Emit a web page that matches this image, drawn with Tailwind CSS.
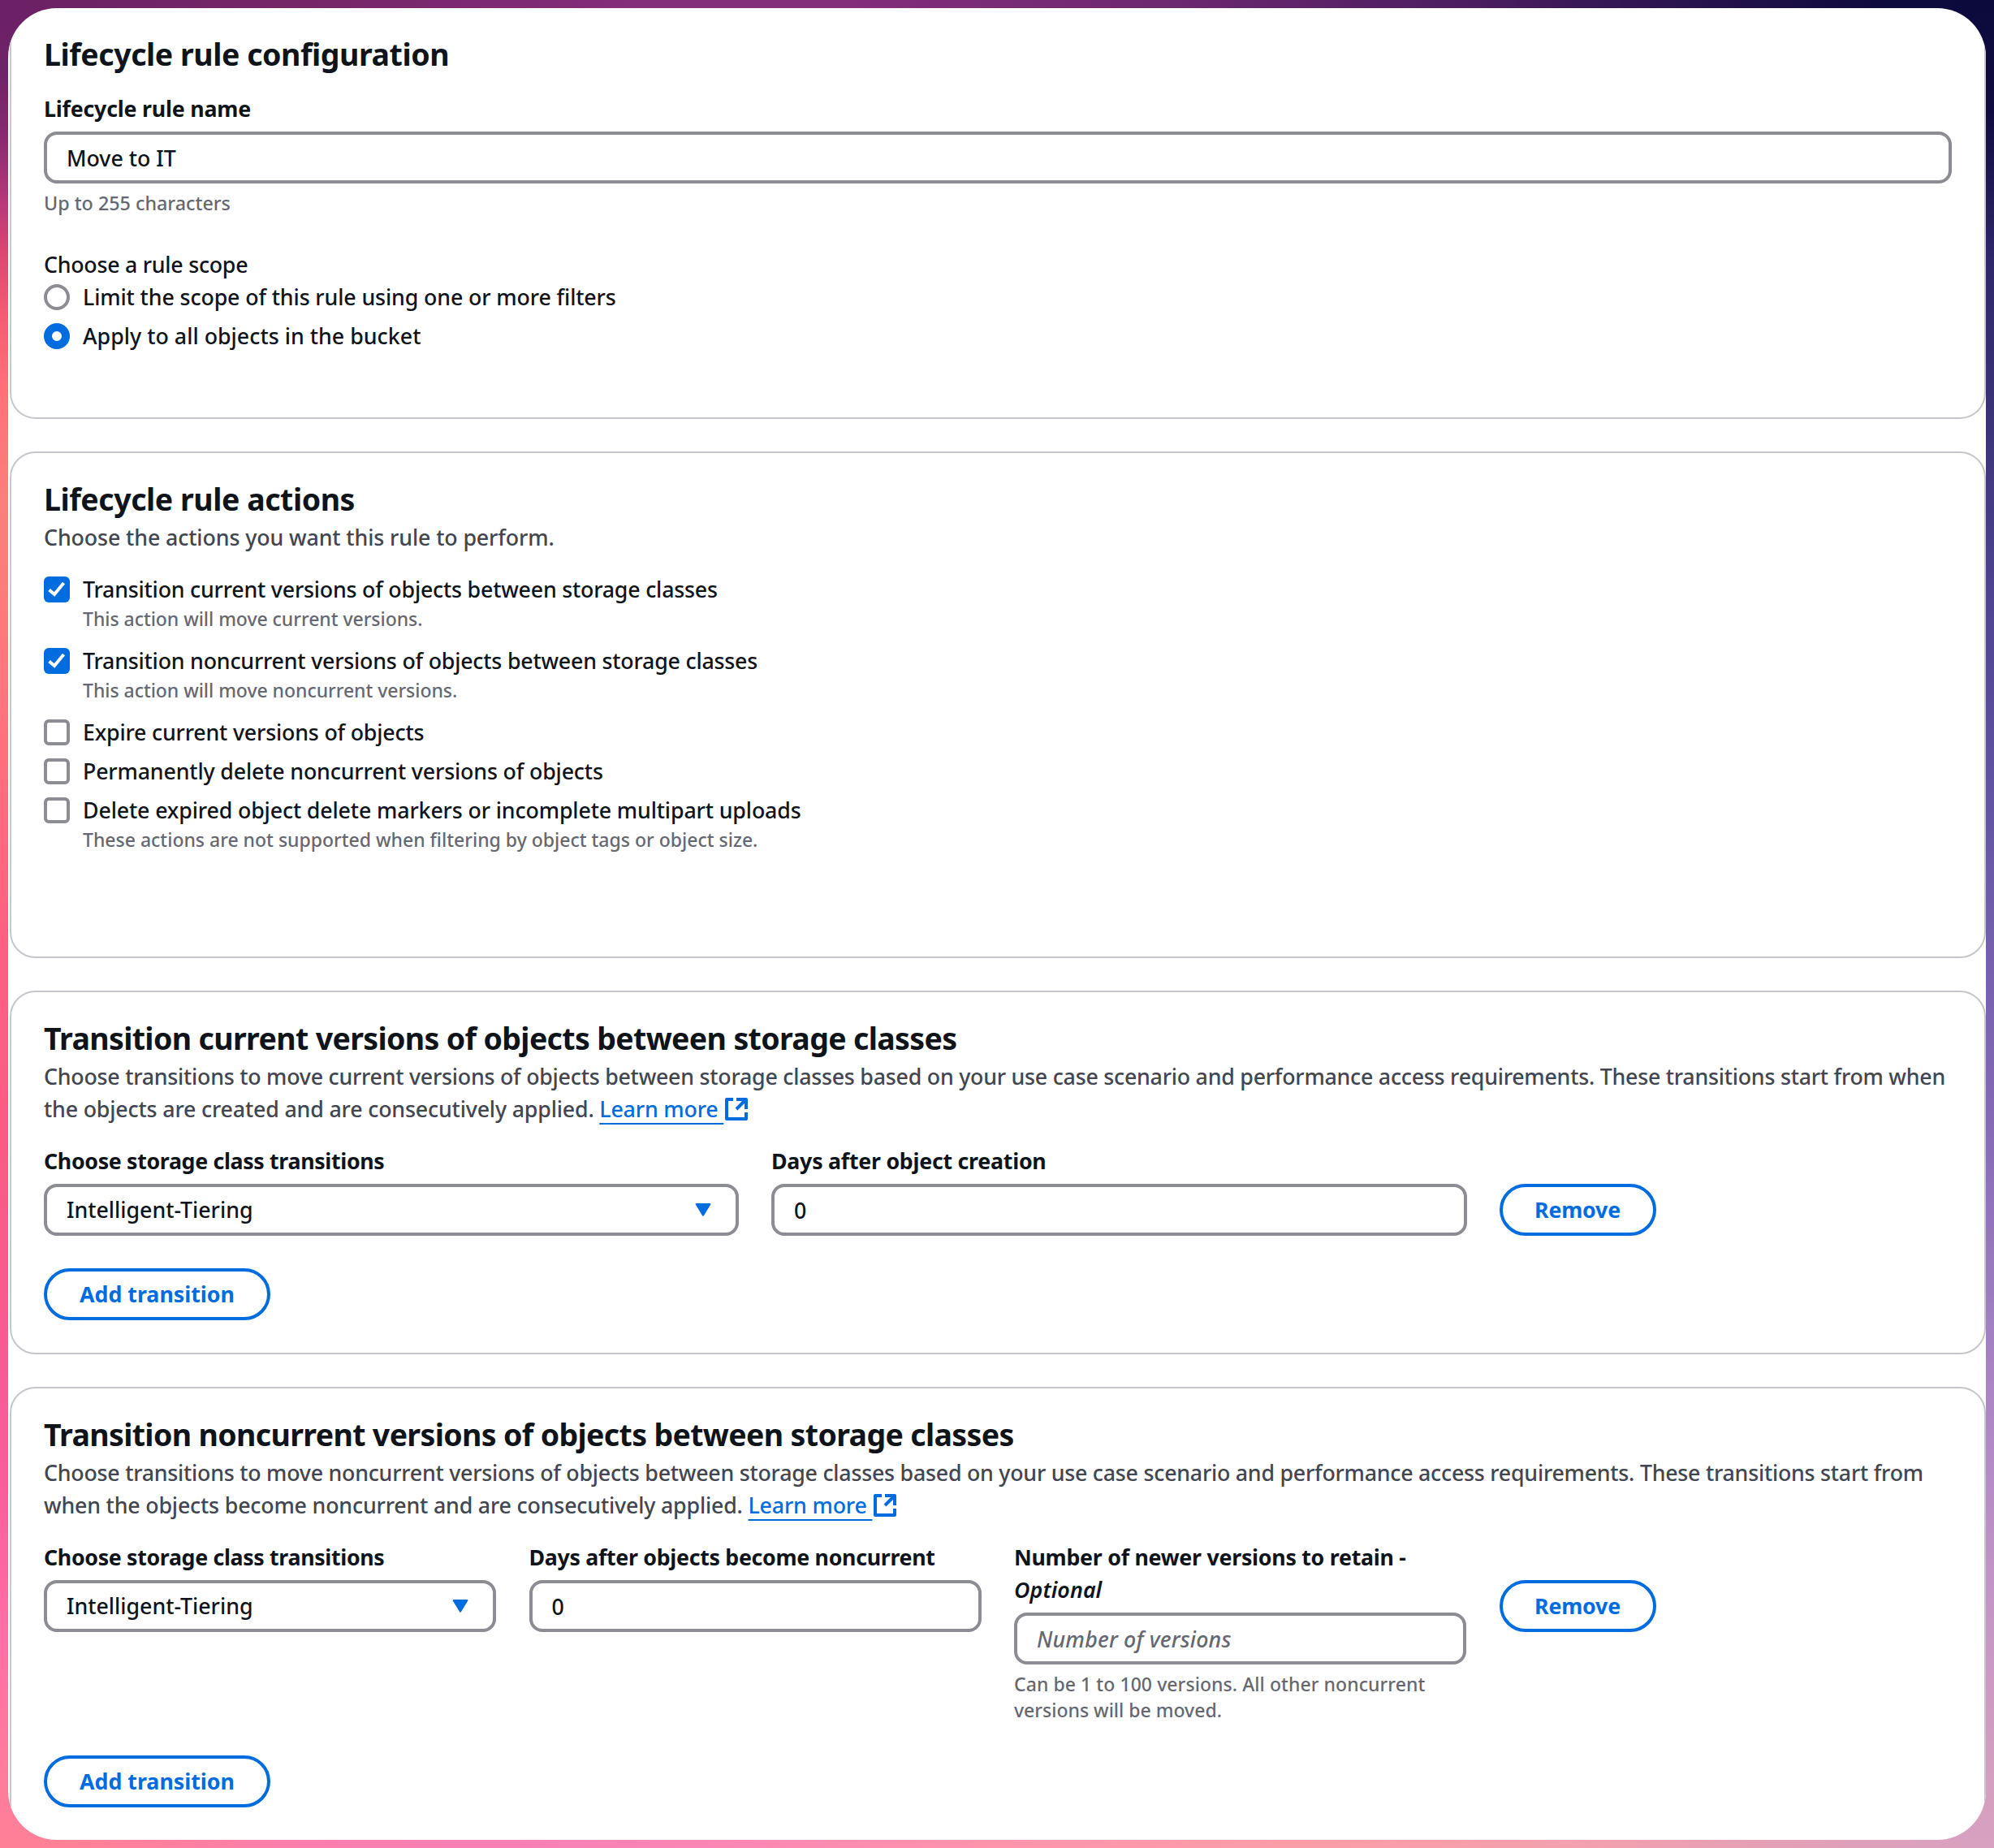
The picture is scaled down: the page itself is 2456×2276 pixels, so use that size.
<!DOCTYPE html>
<html lang="en">
<head>
<meta charset="utf-8">
<title>Lifecycle rule configuration</title>
<script src="https://cdn.jsdelivr.net/npm/@tailwindcss/browser@4"></script>
</head>
<body class="w-[2456px] h-[2276px] overflow-hidden p-[10px] font-['Noto_Sans',sans-serif] text-[26.75px] leading-10 font-medium text-[#0f141a] [background:linear-gradient(90deg,#6b2165_0%,#762669_16%,#842d7b_32%,#842d7b_42%,#6e2872_58%,#4a1d60_74%,#24124c_86%,#0d0a3d_95%,#0c0a3c_100%)_top/100%_10px_no-repeat,linear-gradient(90deg,#ff8097_0%,#ff8097_4%,#fa7fae_16%,#f77fb5_26%,#fb86b4_36%,#ff94ac_50%,#fb9da8_66%,#f3a0ae_80%,#dfa0b8_92%,#d8a0c0_100%)_bottom/100%_10px_no-repeat,linear-gradient(180deg,#6b2165_0%,#6f2268_4%,#842870_7%,#b8387a_11%,#da4572_13.5%,#f65a73_17%,#fe7078_21%,#fb7f7c_27%,#fd7b7c_33%,#ff6d7e_42%,#ff5f82_51%,#fc5a85_62%,#f95a94_74%,#fb5e9c_81%,#ff6fa6_89%,#ff7a9e_95%,#ff8097_100%)_left/50%_100%_no-repeat,linear-gradient(180deg,#0c0a3c_0%,#100b40_6%,#1f1a55_10%,#2e2769_14%,#3a3277_22%,#4d4390_32%,#6355a3_44%,#7360ad_51%,#8468b5_60%,#9c7cc0_70%,#ad86c6_76%,#c394c6_86%,#d29ec0_95%,#d8a0c0_100%)_right/50%_100%_no-repeat]">

<!-- Icons shared by the form -->
<svg class="hidden">
  <symbol id="check" viewBox="0 0 32 32"><path d="M6.5 16.5L13 22L24.5 8" fill="none" stroke="#fff" stroke-width="4"/></symbol>
  <symbol id="caret" viewBox="0 0 20 16"><path d="M1.6 1h16.8L10 14.6z" fill="currentColor" stroke="currentColor" stroke-width="2" stroke-linejoin="round"/></symbol>
  <symbol id="external" viewBox="0 0 28 28"><path d="M10 2H2v24h24v-8M14 2h12v12M26 2L14 14" fill="none" stroke="currentColor" stroke-width="4" stroke-linejoin="round"/></symbol>
</svg>

<main class="h-[2256px] flex flex-col gap-10 bg-white rounded-[60px] overflow-hidden pl-[2px]">

  <section class="h-[506px] shrink-0 border-2 border-t-0 border-[#c6c6cd] rounded-b-[32px] px-10 pt-[33px]">
    <h2 class="text-[37.5px] leading-[48px] font-bold tracking-[-0.45px]">Lifecycle rule configuration</h2>
    <div class="mt-[23px]">
      <label class="block font-bold tracking-[-0.2px]">Lifecycle rule name</label>
      <div class="mt-2 h-16 border-4 border-[#8c8c94] rounded-2xl px-6 pt-0.5 flex items-center">Move to IT</div>
      <p class="mt-2 text-[23.3px] leading-8 text-[#656871]">Up to 255 characters</p>
    </div>
    <div class="mt-10">
      <p class="tracking-[-0.25px]">Choose a rule scope</p>
      <div class="flex flex-col gap-2">
        <label class="flex gap-4"><span class="mt-1 size-8 rounded-full border-4 border-[#8c8c94]"></span><span class="tracking-[-0.11px]">Limit the scope of this rule using one or more filters</span></label>
        <label class="flex gap-4"><span class="mt-1 size-8 rounded-full border-[10px] border-[#006ce0]"></span><span class="tracking-[0.03px]">Apply to all objects in the bucket</span></label>
      </div>
    </div>
  </section>

  <section class="h-[624px] shrink-0 border-2 border-[#c6c6cd] rounded-[32px] px-10 pt-[33px]">
    <h2 class="text-[37.5px] leading-[48px] font-bold tracking-[-0.45px]">Lifecycle rule actions</h2>
    <p class="mt-[3px] text-[#424650] tracking-[-0.1px]">Choose the actions you want this rule to perform.</p>
    <div class="mt-6 flex flex-col gap-2">
      <div class="flex gap-4 pb-2">
        <svg class="mt-1 size-8 rounded-md bg-[#006ce0]"><use href="#check"/></svg>
        <div><p class="tracking-[-0.2px]">Transition current versions of objects between storage classes</p><p class="text-[23px] leading-8 tracking-[-0.04px] text-[#656871]">This action will move current versions.</p></div>
      </div>
      <div class="flex gap-4 pb-2">
        <svg class="mt-1 size-8 rounded-md bg-[#006ce0]"><use href="#check"/></svg>
        <div><p class="tracking-[-0.2px]">Transition noncurrent versions of objects between storage classes</p><p class="text-[23px] leading-8 tracking-[-0.04px] text-[#656871]">This action will move noncurrent versions.</p></div>
      </div>
      <div class="flex gap-4"><span class="mt-1 size-8 rounded-md border-4 border-[#8c8c94]"></span><p class="tracking-[-0.18px]">Expire current versions of objects</p></div>
      <div class="flex gap-4"><span class="mt-1 size-8 rounded-md border-4 border-[#8c8c94]"></span><p class="tracking-[-0.15px]">Permanently delete noncurrent versions of objects</p></div>
      <div class="flex gap-4">
        <span class="mt-1 size-8 rounded-md border-4 border-[#8c8c94]"></span>
        <div><p class="tracking-[-0.13px]">Delete expired object delete markers or incomplete multipart uploads</p><p class="text-[23px] leading-8 text-[#656871]">These actions are not supported when filtering by object tags or object size.</p></div>
      </div>
    </div>
  </section>

  <section class="h-[448px] shrink-0 border-2 border-[#c6c6cd] rounded-[32px] px-10 pt-[33px]">
    <h2 class="text-[37.5px] leading-[48px] font-bold tracking-[-0.65px]">Transition current versions of objects between storage classes</h2>
    <p class="mt-[3px] text-[#424650] tracking-[-0.23px] whitespace-nowrap">Choose transitions to move current versions of objects between storage classes based on your use case scenario and performance access requirements. These transitions start from when<br><span class="tracking-[-0.16px]">the objects are created and are consecutively applied. <a class="text-[#006ce0]"><span class="underline decoration-2 underline-offset-[7px] whitespace-pre">Learn more </span><svg class="inline-block size-7 ml-0.5 -mt-1.5 align-middle"><use href="#external"/></svg></a></span></p>
    <div class="mt-6 grid grid-cols-[856px_856.5px_557.5px] gap-10">
      <div>
        <label class="block font-bold tracking-[-0.33px]">Choose storage class transitions</label>
        <div class="mt-2 h-16 border-4 border-[#8c8c94] rounded-2xl pl-6 pr-[30px] flex items-center justify-between">Intelligent-Tiering<svg class="w-5 h-4 text-[#006ce0]"><use href="#caret"/></svg></div>
      </div>
      <div>
        <label class="block font-bold tracking-[-0.25px]">Days after object creation</label>
        <div class="mt-2 h-16 border-4 border-[#8c8c94] rounded-2xl px-6 pt-0.5 flex items-center">0</div>
      </div>
      <div class="pt-12"><button class="w-[193px] h-16 rounded-full border-4 border-[#006ce0] text-[#006ce0] font-bold tracking-[-0.2px]">Remove</button></div>
    </div>
    <button class="mt-10 w-[279px] h-16 rounded-full border-4 border-[#006ce0] text-[#006ce0] font-bold">Add transition</button>
  </section>

  <section class="h-[600px] shrink-0 border-2 border-[#c6c6cd] rounded-t-[32px] px-10 pt-[33px]">
    <h2 class="text-[37.5px] leading-[48px] font-bold tracking-[-0.65px]">Transition noncurrent versions of objects between storage classes</h2>
    <p class="mt-[3px] text-[#424650] tracking-[-0.23px] whitespace-nowrap">Choose transitions to move noncurrent versions of objects between storage classes based on your use case scenario and performance access requirements. These transitions start from<br><span class="tracking-[-0.17px]">when the objects become noncurrent and are consecutively applied. <a class="text-[#006ce0]"><span class="underline decoration-2 underline-offset-[7px] whitespace-pre">Learn more </span><svg class="inline-block size-7 ml-0.5 -mt-1.5 align-middle"><use href="#external"/></svg></a></span></p>
    <div class="mt-6 grid grid-cols-4 gap-10">
      <div>
        <label class="block font-bold tracking-[-0.33px]">Choose storage class transitions</label>
        <div class="mt-2 mr-px h-16 border-4 border-[#8c8c94] rounded-2xl pl-6 pr-[30px] flex items-center justify-between">Intelligent-Tiering<svg class="w-5 h-4 text-[#006ce0]"><use href="#caret"/></svg></div>
      </div>
      <div>
        <label class="block font-bold tracking-[-0.3px]">Days after objects become noncurrent</label>
        <div class="mt-2 h-16 border-4 border-[#8c8c94] rounded-2xl px-6 pt-0.5 flex items-center">0</div>
      </div>
      <div>
        <label class="block font-bold tracking-[-0.26px]">Number of newer versions to retain -<br><i class="font-semibold tracking-[0.1px]">Optional</i></label>
        <div class="mt-2 mr-px h-16 border-4 border-[#8c8c94] rounded-2xl px-6 pt-0.5 flex items-center italic tracking-[0.17px] text-[#656871]">Number of versions</div>
        <p class="mt-2 text-[23px] leading-8 tracking-[0.07px] text-[#656871]">Can be 1 to 100 versions. All other noncurrent<br><span class="tracking-normal">versions will be moved.</span></p>
      </div>
      <div class="pt-12"><button class="w-[193px] h-16 rounded-full border-4 border-[#006ce0] text-[#006ce0] font-bold tracking-[-0.2px]">Remove</button></div>
    </div>
    <button class="mt-10 w-[279px] h-16 rounded-full border-4 border-[#006ce0] text-[#006ce0] font-bold">Add transition</button>
  </section>
</main>
</body>
</html>
